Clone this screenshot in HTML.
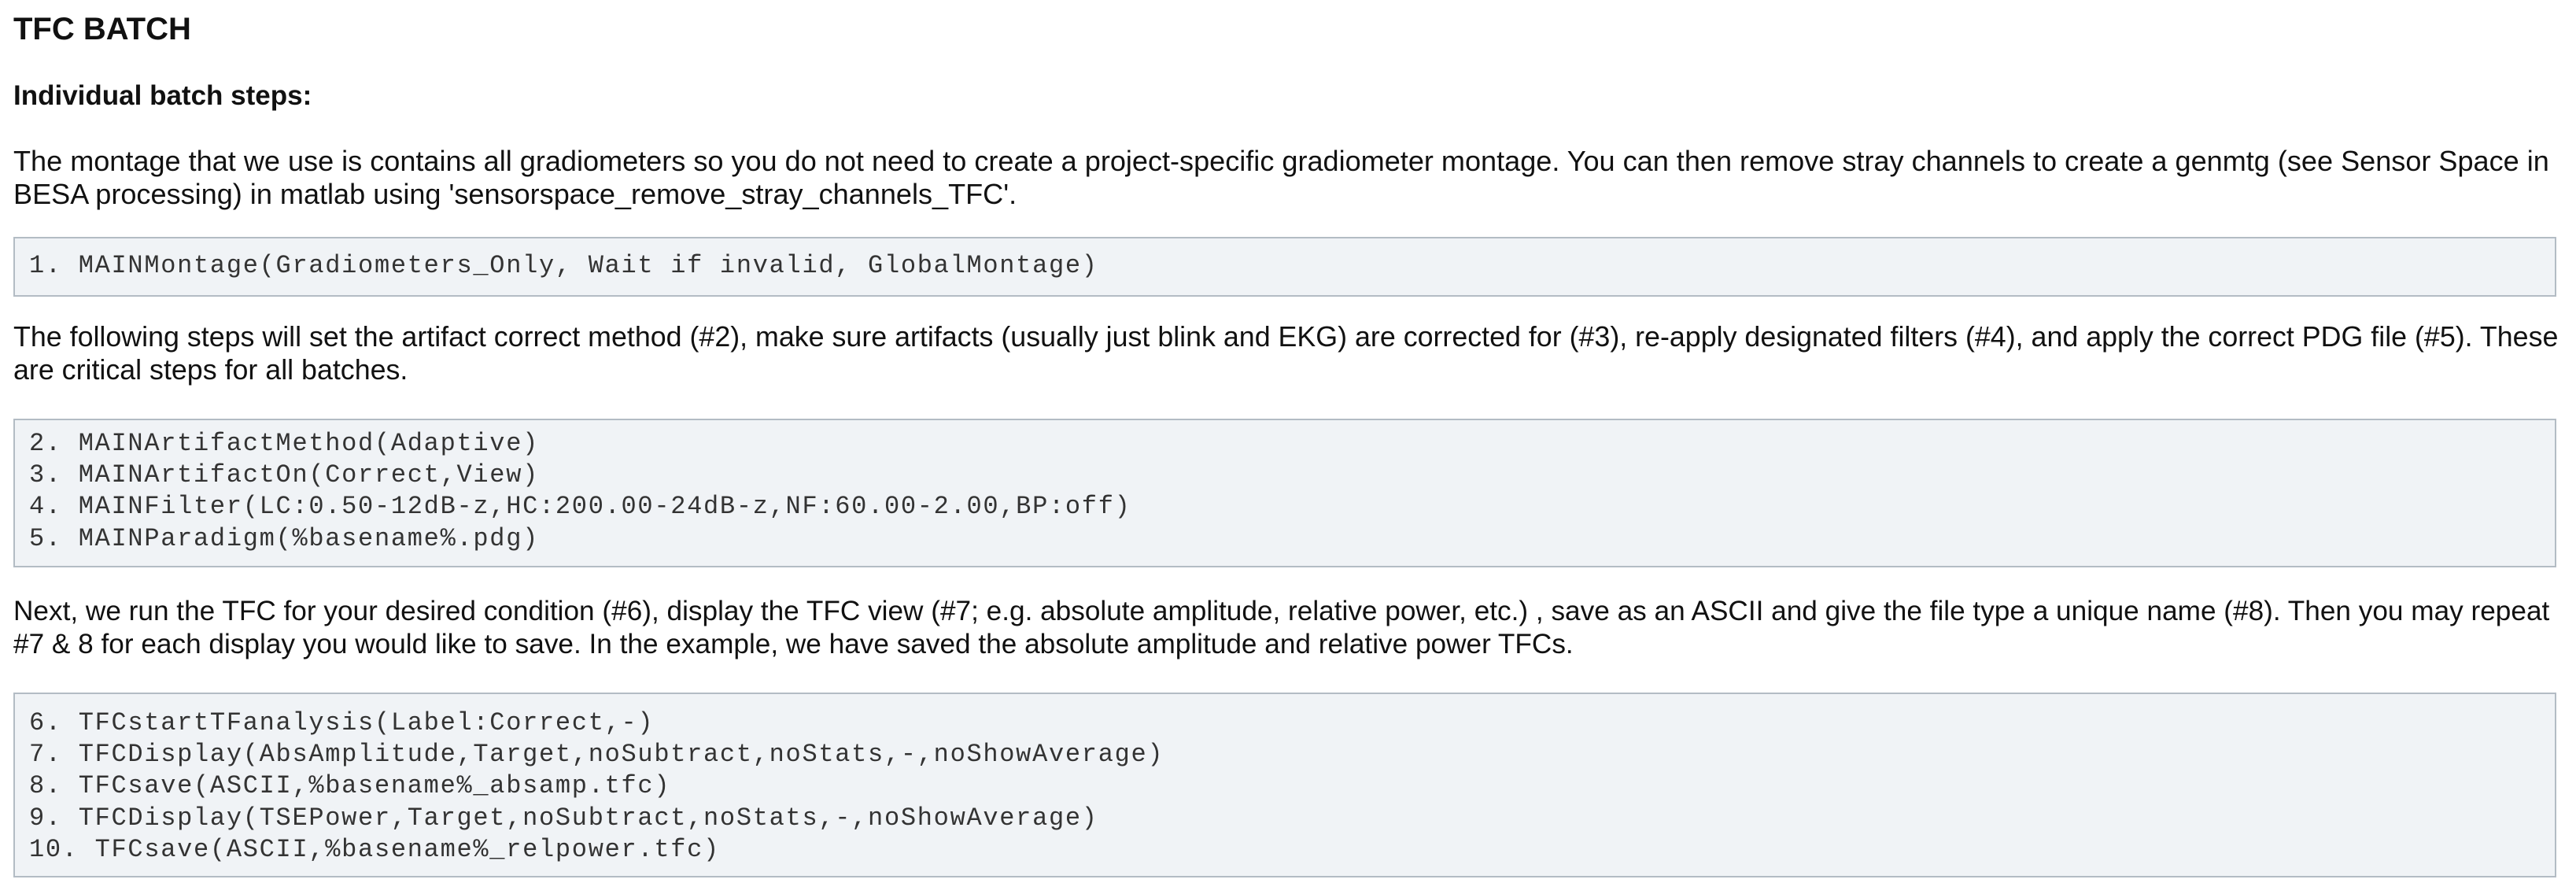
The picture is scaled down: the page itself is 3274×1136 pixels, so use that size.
<!DOCTYPE html>
<html><head><meta charset="utf-8"><style>
html,body{margin:0;padding:0;background:#fff;width:3274px;height:1136px;overflow:hidden}
body{font-family:"Liberation Sans",Arial,sans-serif;color:#111;position:relative}
.t{position:absolute;left:17px;white-space:nowrap;line-height:42px}
h1{position:absolute;left:17px;top:14px;margin:0;font-size:40px;font-weight:bold;line-height:46px}
.h2{position:absolute;left:17px;top:101px;font-size:35px;font-weight:bold;line-height:42px}
p{margin:0;font-size:35.5px}
.box{position:absolute;left:17px;width:3232px;background:#f0f3f6;border:2px solid #b3bcc4;box-sizing:border-box}
.code{position:absolute;left:37px;font-family:"Liberation Mono","Courier New",monospace;font-size:32px;letter-spacing:1.7px;line-height:40.2px;white-space:pre;color:#333}
</style></head><body>
<h1>TFC BATCH</h1>
<div class="h2">Individual batch steps:</div>
<p class="t" style="top:184px;font-size:36.1px">The montage that we use is contains all gradiometers so you do not need to create a project-specific gradiometer montage. You can then remove stray channels to create a genmtg (see Sensor Space in<br>BESA processing) in matlab using 'sensorspace_remove_stray_channels_TFC'.</p>
<div class="box" style="top:301px;height:76px"></div>
<div class="code" style="top:318px">1. MAINMontage(Gradiometers_Only, Wait if invalid, GlobalMontage)</div>
<p class="t" style="top:407px;font-size:35.8px">The following steps will set the artifact correct method (#2), make sure artifacts (usually just blink and EKG) are corrected for (#3), re-apply designated filters (#4), and apply the correct PDG file (#5). These<br>are critical steps for all batches.</p>
<div class="box" style="top:532px;height:189px"></div>
<div class="code" style="top:544px">2. MAINArtifactMethod(Adaptive)
3. MAINArtifactOn(Correct,View)
4. MAINFilter(LC:0.50-12dB-z,HC:200.00-24dB-z,NF:60.00-2.00,BP:off)
5. MAINParadigm(%basename%.pdg)</div>
<p class="t" style="top:756px;font-size:35.2px">Next, we run the TFC for your desired condition (#6), display the TFC view (#7; e.g. absolute amplitude, relative power, etc.) , save as an ASCII and give the file type a unique name (#8). Then you may repeat<br>#7 &amp; 8 for each display you would like to save. In the example, we have saved the absolute amplitude and relative power TFCs.</p>
<div class="box" style="top:880px;height:235px"></div>
<div class="code" style="top:899px">6. TFCstartTFanalysis(Label:Correct,-)
7. TFCDisplay(AbsAmplitude,Target,noSubtract,noStats,-,noShowAverage)
8. TFCsave(ASCII,%basename%_absamp.tfc)
9. TFCDisplay(TSEPower,Target,noSubtract,noStats,-,noShowAverage)
10. TFCsave(ASCII,%basename%_relpower.tfc)</div>
</body></html>
